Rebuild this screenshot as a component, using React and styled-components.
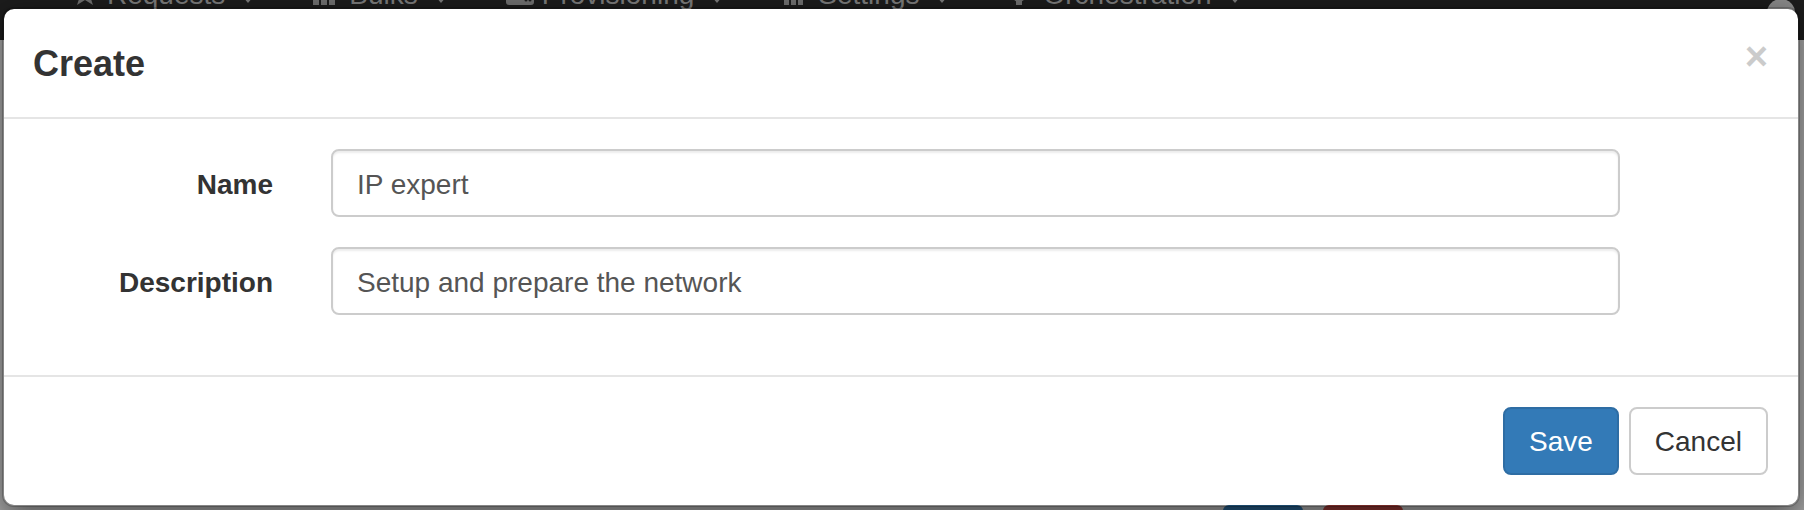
import React from "react";
import styled, { createGlobalStyle } from "styled-components";

const GlobalStyle = createGlobalStyle`
  html, body { margin: 0; padding: 0; }
  body {
    font-family: "Liberation Sans", Arial, Helvetica, sans-serif;
    color: #333;
  }
  * { box-sizing: border-box; }
`;

const Page = styled.div`
  position: relative;
  width: 1804px;
  height: 510px;
  overflow: hidden;
  background: #a8a8a8;
  display: flex;
  flex-direction: column;
`;

const Navbar = styled.nav`
  height: 40px;
  flex-shrink: 0;
  background: #1c1c1c;
  display: flex;
  align-items: flex-start;
  overflow: hidden;
`;

const NavList = styled.ul`
  display: flex;
  list-style: none;
  margin: -19px 0 0 41px;
  padding: 0;
`;

const NavLink = styled.li`
  display: flex;
  align-items: flex-start;
  padding: 0 30px;
  height: 28px;
  font-size: 28px;
  line-height: 28px;
  color: #7b7b7b;
  white-space: nowrap;

  svg {
    width: 28px;
    height: 22px;
    margin: 2px 8px 0 0;
    flex-shrink: 0;
  }
`;

const Caret = styled.span`
  width: 0;
  height: 0;
  margin: 16px 0 0 18px;
  border-left: 5px solid transparent;
  border-right: 5px solid transparent;
  border-top: 6px solid #7b7b7b;
`;

const Avatar = styled.span`
  width: 28px;
  height: 28px;
  margin: -1px 9px 0 auto;
  border-radius: 50%;
  background: #8a8a8a;
`;

const Main = styled.main`
  flex: 1;
  display: flex;
  align-items: flex-start;
  gap: 20px;
  padding: 465px 0 0 1223px;
`;

const BgButton = styled.span`
  width: 80px;
  height: 40px;
  border-radius: 6px 6px 0 0;
  background: ${({ tone }) => (tone === "danger" ? "#8f3531" : "#245a85")};
`;

const Modal = styled.div`
  position: absolute;
  top: 7px;
  left: 2px;
  right: 4px;
  display: flex;
  flex-direction: column;
  background: #fff;
  border: 2px solid rgba(0, 0, 0, 0.2);
  border-radius: 12px;
  box-shadow: 0 10px 30px rgba(0, 0, 0, 0.5);
  background-clip: padding-box;
`;

const Header = styled.div`
  display: flex;
  justify-content: space-between;
  align-items: flex-start;
  padding: 31px 30px 29px 29px;
  border-bottom: 2px solid #e5e5e5;
`;

const Title = styled.h4`
  margin: 0;
  font-size: 36px;
  font-weight: 700;
  line-height: 48px;
  color: #333;
`;

const Close = styled.button`
  margin-top: -4px;
  padding: 0;
  border: 0;
  background: none;
  font-family: inherit;
  font-size: 40px;
  font-weight: 700;
  line-height: 1;
  color: #000;
  opacity: 0.2;
  text-shadow: 0 2px 0 #fff;
  cursor: pointer;
`;

const Body = styled.div`
  padding: 30px;
`;

const FormRow = styled.div`
  display: flex;
  margin: 0 -30px 30px;
`;

const Label = styled.label`
  flex: 0 0 16.6667%;
  padding: 16px 30px 0;
  text-align: right;
  font-size: 28px;
  line-height: 40px;
  font-weight: 700;
  color: #333;
`;

const Field = styled.div`
  flex: 0 0 75%;
  padding: 0 29px 0 28px;
`;

const Input = styled.input`
  display: block;
  width: 100%;
  height: 68px;
  padding: 14px 24px 10px;
  font-family: inherit;
  font-size: 28px;
  line-height: 40px;
  color: #555;
  background: #fff;
  border: 2px solid #ccc;
  border-radius: 8px;
  box-shadow: inset 0 2px 2px rgba(0, 0, 0, 0.075);
  outline: none;
`;

const Footer = styled.div`
  display: flex;
  justify-content: flex-end;
  gap: 10px;
  padding: 30px;
  border-top: 2px solid #e5e5e5;
`;

const Button = styled.button`
  padding: 13px 24px 11px;
  font-family: inherit;
  font-size: 28px;
  line-height: 40px;
  border: 2px solid ${({ primary }) => (primary ? "#2e6da4" : "#ccc")};
  border-radius: 8px;
  background: ${({ primary }) => (primary ? "#337ab7" : "#fff")};
  color: ${({ primary }) => (primary ? "#fff" : "#333")};
  cursor: pointer;
`;

const StarIcon = () => (
  <svg viewBox="0 0 28 22" fill="#707070">
    <polygon points="14,0 17,8 26,8 19,13 22,22 14,17 6,22 9,13 2,8 11,8" />
  </svg>
);

const GridIcon = () => (
  <svg viewBox="0 0 28 22" fill="#707070">
    <rect x="0" y="16" width="6" height="6" />
    <rect x="8" y="16" width="6" height="6" />
    <rect x="16" y="16" width="6" height="6" />
  </svg>
);

const DriveIcon = () => (
  <svg viewBox="0 0 28 22" fill="#707070">
    <rect x="0" y="12" width="28" height="10" rx="3" />
    <circle cx="20" cy="17" r="1.5" fill="#1c1c1c" />
    <circle cx="24" cy="17" r="1.5" fill="#1c1c1c" />
  </svg>
);

const BarsIcon = () => (
  <svg viewBox="0 0 28 22" fill="#707070">
    <rect x="2" y="10" width="5" height="12" />
    <rect x="9" y="4" width="5" height="18" />
    <rect x="16" y="8" width="5" height="14" />
  </svg>
);

const CogIcon = () => (
  <svg viewBox="0 0 28 22" fill="#707070">
    <circle cx="12" cy="12" r="7" />
    <rect x="9" y="16" width="6" height="6" />
    <rect x="3" y="9" width="18" height="6" />
  </svg>
);

const navItems = [
  { label: "Requests", icon: StarIcon },
  { label: "Bulks", icon: GridIcon },
  { label: "Provisioning", icon: DriveIcon },
  { label: "Settings", icon: BarsIcon },
  { label: "Orchestration", icon: CogIcon },
];

const App = () => (
  <>
    <GlobalStyle />
    <Page>
      <Navbar>
        <NavList>
          {navItems.map(({ label, icon: Icon }) => (
            <NavLink key={label}>
              <Icon />
              {label}
              <Caret />
            </NavLink>
          ))}
        </NavList>
        <Avatar />
      </Navbar>
      <Main>
        <BgButton />
        <BgButton tone="danger" />
      </Main>

      <Modal role="dialog">
        <Header>
          <Title>Create</Title>
          <Close aria-label="Close">×</Close>
        </Header>
        <Body>
          <FormRow>
            <Label>Name</Label>
            <Field>
              <Input value="IP expert" readOnly />
            </Field>
          </FormRow>
          <FormRow>
            <Label>Description</Label>
            <Field>
              <Input value="Setup and prepare the network" readOnly />
            </Field>
          </FormRow>
        </Body>
        <Footer>
          <Button primary>Save</Button>
          <Button>Cancel</Button>
        </Footer>
      </Modal>
    </Page>
  </>
);

export default App;
